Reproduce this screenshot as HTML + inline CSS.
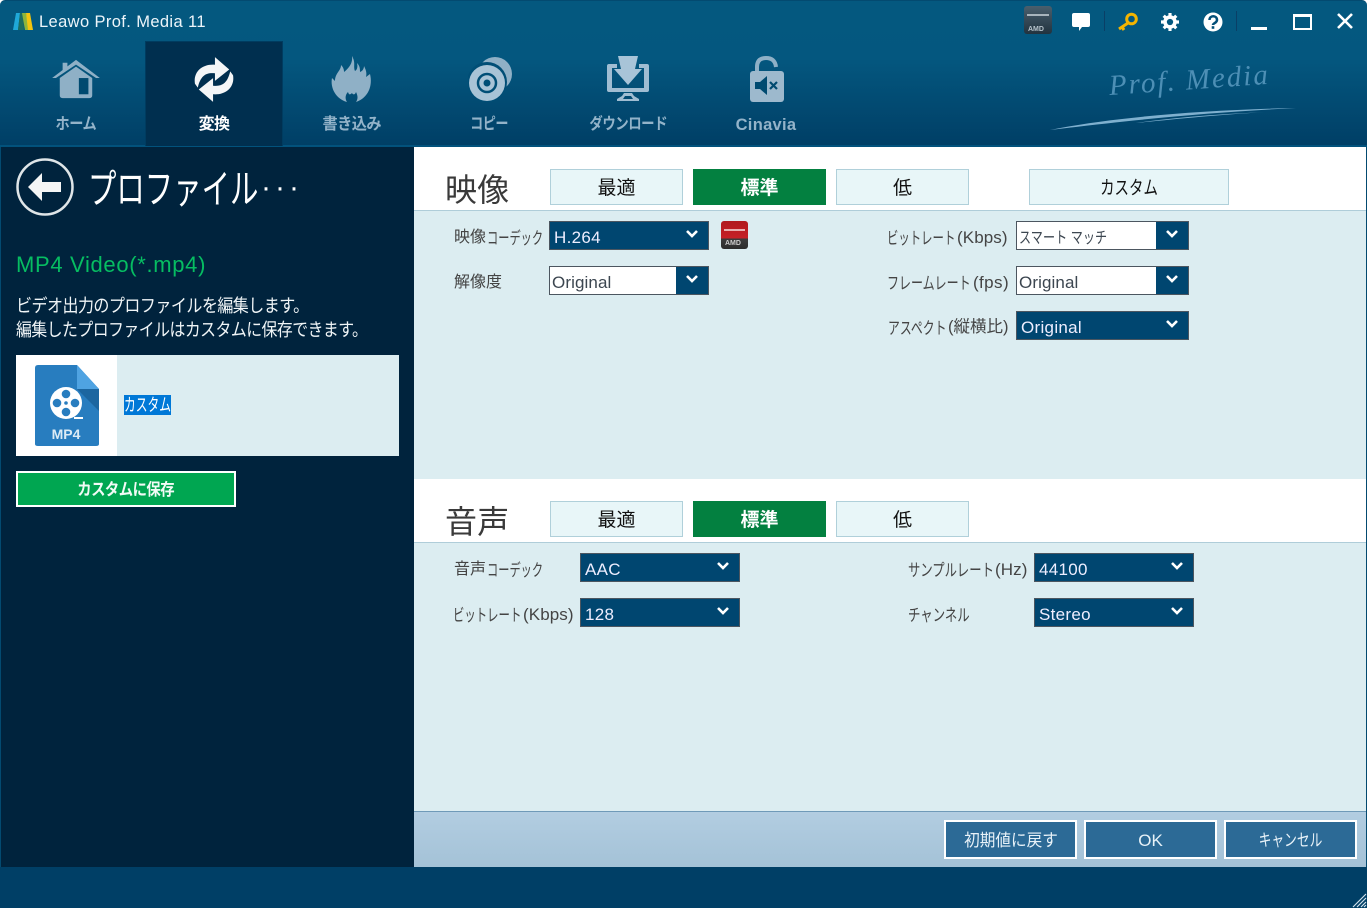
<!DOCTYPE html>
<html lang="ja"><head><meta charset="utf-8"><title>Leawo Prof. Media 11</title>
<style>
html,body{margin:0;padding:0;width:1367px;height:908px;overflow:hidden;background:#fff}
body{position:relative;font-family:"Liberation Sans","Noto Sans CJK JP",sans-serif;color:#333}
.a,.t,.b,.dd{position:absolute;box-sizing:border-box}
.t{white-space:nowrap;line-height:1}
.k{transform:scaleX(var(--s));transform-origin:left center}
.s{display:inline-block;transform:scaleX(var(--s));transform-origin:center center}
.nav{font-weight:bold;font-size:16px;color:#93b3c9;text-align:center;width:138px;top:117px;letter-spacing:-.6px}
.b{top:169px;height:36px;border:1px solid #b0d0da;background:#e8f6f8;color:#111;text-align:center;font-size:19px;line-height:38px}
.b.on{background:#038040;border-color:#038040;color:#fff;font-weight:bold}
.lb{font-size:16px;color:#444}
.kn{font-size:17px;color:#444}
.la{font-size:17px;color:#444;letter-spacing:.1px}
.dd{width:160px;height:29px;background:#004670;border:1px solid #4c5660;color:#eef;font-size:17px;line-height:31px;padding-left:4px;letter-spacing:.3px;white-space:nowrap}
.dd.w{background:#fff;color:#3c4650;padding-left:2px;letter-spacing:.1px}
.dd.w::after{content:"";position:absolute;right:0;top:0;width:32px;height:27px;background:#004670}
.dd svg{position:absolute;right:9px;top:6px;width:14px;height:12px;z-index:2}
.fb{position:absolute;top:820px;width:133px;height:39px;box-sizing:border-box;border:2px solid #fff;background:#2c6a96;color:#e8f2f8;font-size:17px;line-height:38px;text-align:center;white-space:nowrap}
</style></head><body>
<svg width="0" height="0" style="position:absolute"><defs>
<symbol id="cv" viewBox="0 0 14 12"><path d="M2 3l5 5 5-5" fill="none" stroke="#fff" stroke-width="2.6"/></symbol>
</defs></svg>

<!-- header -->
<div class="a" style="left:0;top:0;width:1367px;height:147px;background:linear-gradient(#04587f 0,#04577f 40%,#003f66 100%);border-top:1px solid #034a70;border-bottom:2px solid #02527c;border-radius:5px 5px 0 0"></div>
<svg class="a" style="left:13px;top:11px" width="21" height="20" viewBox="0 0 21 20"><path d="M0 19L3 2h4L5 19z" fill="#1fa8d8"/><path d="M5 19L7 2h3l1 17z" fill="#1c6c60"/><path d="M9 2h4l3 17h-4z" fill="#8db53b"/><path d="M13 2h4l3 17h-5z" fill="#f2c40f"/></svg>
<div class="t" style="left:39px;top:14px;font-size:16.5px;color:#edf5fa;letter-spacing:.38px">Leawo Prof. Media 11</div>

<div class="a" style="left:145px;top:41px;width:138px;height:105px;background:#002f4f;border:1px solid #003c60;border-bottom:0"></div>

<!-- home -->
<svg class="a" style="left:51px;top:58px" width="50" height="42" viewBox="0 0 52 44" fill="#8fb0c6"><path d="M1 21L26 2l25 19h-4L26 7 5 21z"/><path d="M12 5h5v5l-5 4z"/><path d="M26 9l17 12v18q0 3-3 3H12q-3 0-3-3V21z"/><rect x="29" y="21" width="10" height="17" fill="#004a70"/></svg>
<div class="t nav" style="left:7px"><span class="s" style="--s:.89">ホーム</span></div>
<!-- convert -->
<svg class="a" style="left:194px;top:56px" width="40" height="47" viewBox="0 0 42 49" fill="#f4f6f7"><path d="M1 29C-1 17 8 8 22 9V1l15 13-15 12v-8C13 17 7 20 4 33z"/><path d="M41 20C43 32 34 41 20 40v8L5 35l15-12v8C29 32 35 29 38 16z"/></svg>
<div class="t nav" style="left:145px;color:#fff">変換</div>
<!-- burn -->
<svg class="a" style="left:330px;top:55px" width="44" height="48" viewBox="0 0 44 48" fill="#8fb0c6"><path d="M22 1c4 7 1 10 3 15 2-1 3-4 2-8 3 3 3 6 3 9 3-1 4-4 4-6 2 4 3 7 2 11l4-3c3 12-2 24-14 28 2-3 2-6 0-10-1 3-3 3-4 1-2 2-3 2-4-1-3 3-3 7-1 10C6 44 0 33 2 23l3 3c0-8 6-10 6-16 2 2 3 4 3 7 5-4 9-9 8-16z"/></svg>
<div class="t nav" style="left:283px"><span class="s" style="--s:.95">書き込み</span></div>
<!-- copy -->
<svg class="a" style="left:468px;top:55px" width="46" height="48" viewBox="0 0 46 48"><circle cx="27" cy="19" r="17" fill="#8fb0c6"/><circle cx="19" cy="27" r="20" fill="#004e76"/><circle cx="19" cy="28" r="18" fill="#a8c3d6"/><circle cx="19" cy="28" r="9" fill="none" stroke="#004e76" stroke-width="2.500"/><circle cx="19" cy="28" r="3.500" fill="#004e76"/></svg>
<div class="t nav" style="left:420px"><span class="s" style="--s:.82">コピー</span></div>
<!-- download -->
<svg class="a" style="left:606px;top:55px" width="44" height="46" viewBox="0 0 44 46" fill="#a0bdd2"><path d="M3 9h8v4H6v20h32V13h-5V9h8q2 0 2 2v24q0 2-2 2H3q-2 0-2-2V11q0-2 2-2z"/><path d="M12 1h20l-3 13h7L22 30 8 14h7z" fill="#a8c4d8"/><path d="M18 38h8l2 3 5 3v2H11v-2l5-3z"/><path d="M19 41h6l2 3H17z" fill="#014a72"/></svg>
<div class="t nav" style="left:559px"><span class="s" style="--s:.84">ダウンロード</span></div>
<!-- cinavia -->
<svg class="a" style="left:749px;top:56px" width="36" height="47" viewBox="0 0 36 47"><path d="M8 16V11Q8 2 17 2t10 9" fill="none" stroke="#8fb0c6" stroke-width="4"/><rect x="1" y="15" width="34" height="31" rx="3" fill="#9db9cd"/><path d="M6 26h5l7-6v19l-7-6H6z" fill="#004a70"/><path d="M21 26l7 7m0-7l-7 7" stroke="#004a70" stroke-width="2.200"/></svg>
<div class="t nav" style="left:697px;letter-spacing:.3px;font-size:16.500px">Cinavia</div>

<!-- top right icons -->
<div class="a" style="left:1024px;top:6px;width:28px;height:28px;border-radius:3px;background:linear-gradient(#4a5f6d,#22333f)"><div class="a" style="left:3px;top:8px;width:22px;height:2px;background:#a8b4bc"></div><div class="t" style="left:4px;top:20px;font-size:7px;font-weight:bold;color:#b8c4cc">AMD</div></div>
<svg class="a" style="left:1071px;top:12px" width="20" height="20" viewBox="0 0 20 20" fill="#fff"><path d="M3 1h14q2 0 2 2v10q0 2-2 2h-6l-3 4v-4H3q-2 0-2-2V3q0-2 2-2z"/></svg>
<div class="a" style="left:1104px;top:11px;width:1px;height:20px;background:#0a3f66"></div>
<svg class="a" style="left:1117px;top:12px" width="22" height="20" viewBox="0 0 22 20"><circle cx="14.500" cy="7" r="4.800" fill="none" stroke="#f4b400" stroke-width="3"/><path d="M11 11L2 17M5 15l2 3" stroke="#f4b400" stroke-width="3" fill="none"/></svg>
<svg class="a" style="left:1161px;top:13px" width="18" height="18" viewBox="0 0 20 20"><circle cx="10" cy="10" r="5.500" fill="none" stroke="#fff" stroke-width="4"/><g stroke="#fff" stroke-width="3.500"><path d="M10 0v4M10 16v4M0 10h4M16 10h4M3 3l3 3M14 14l3 3M17 3l-3 3M6 14l-3 3"/></g></svg>
<svg class="a" style="left:1203px;top:12px" width="20" height="20" viewBox="0 0 20 20"><circle cx="10" cy="10" r="9.500" fill="#fff"/><path d="M6.500 8c0-5 7.500-5 7.500 0 0 3-4 3-4 5" fill="none" stroke="#034f78" stroke-width="2.500"/><rect x="8.700" y="14.200" width="2.600" height="2.600" fill="#034f78"/></svg>
<div class="a" style="left:1236px;top:11px;width:1px;height:20px;background:#0a3f66"></div>
<div class="a" style="left:1251px;top:27px;width:16px;height:3px;background:#fff"></div>
<div class="a" style="left:1293px;top:14px;width:19px;height:16px;border:2px solid #fff;border-top-width:3px"></div>
<svg class="a" style="left:1336px;top:12px" width="18" height="18" viewBox="0 0 18 18"><path d="M2 2l14 14M16 2L2 16" stroke="#fff" stroke-width="2.600"/></svg>

<!-- logo -->
<div class="t" style="left:1108px;top:72px;font-family:'Liberation Serif',serif;font-style:italic;font-size:29px;color:#4d8fb5;letter-spacing:2px;transform:rotate(-4deg);transform-origin:left top">Prof. Media</div>
<svg class="a" style="left:1048px;top:106px" width="250" height="26" viewBox="0 0 250 26"><path d="M2 24C60 12 150 4 248 2 170 6 100 12 2 24z" fill="#7fb0cf"/><path d="M88 17c50-7 90-9 130-11-50 3-90 7-130 11z" fill="#7fb0cf"/></svg>

<!-- left panel -->
<div class="a" style="left:1px;top:147px;width:413px;height:720px;background:#00233d"></div>
<svg class="a" style="left:16px;top:158px" width="58" height="58" viewBox="0 0 58 58"><circle cx="29" cy="29" r="27.500" fill="none" stroke="#dfe5e8" stroke-width="2.500"/><path d="M12 29L26 15v9h19v10H26v9z" fill="#f5f6f6"/></svg>
<div class="t k" style="--s:.71;left:88px;top:170px;font-size:40px;color:#fff">プロファイル</div>
<div class="t" style="left:261px;top:173px;font-size:30px;color:#fff;letter-spacing:4px">···</div>
<div class="t" style="left:16px;top:254px;font-size:22px;color:#06bd62;letter-spacing:.67px">MP4 Video(*.mp4)</div>
<div class="t k" style="--s:.89;left:16px;top:297px;font-size:18px;color:#f0f5f7;letter-spacing:-.6px">ビデオ出力のプロファイルを編集します。</div>
<div class="t k" style="--s:.882;left:16px;top:321px;font-size:18px;color:#f0f5f7;letter-spacing:-.6px">編集したプロファイルはカスタムに保存できます。</div>
<div class="a" style="left:16px;top:355px;width:383px;height:101px;background:#dcedf1"></div>
<div class="a" style="left:16px;top:355px;width:101px;height:101px;background:#fff"></div>
<svg class="a" style="left:34px;top:364px" width="66" height="83" viewBox="0 0 66 83"><path d="M4 1h39l22 24v55q0 2-3 2H4q-3 0-3-2V4q0-3 3-3z" fill="#287dbf"/><path d="M43 1l22 24H43z" fill="#4fa3e2"/><path d="M43 25h22v22z" fill="#1c66a0"/><circle cx="32" cy="39" r="16" fill="#fff"/><path d="M40 53h9v2h-9z" fill="#fff"/><g fill="#287dbf"><circle cx="32" cy="30" r="4.300"/><circle cx="32" cy="48" r="4.300"/><circle cx="23" cy="39" r="4.300"/><circle cx="41" cy="39" r="4.300"/><circle cx="32" cy="39" r="1.800"/></g><text x="32" y="75" text-anchor="middle" font-family="Liberation Sans" font-weight="bold" font-size="14" fill="#dcebf5">MP4</text></svg>
<div class="a" style="left:124px;top:395px;width:47px;height:20px;background:#0078d7"></div>
<div class="t k" style="--s:.66;left:124px;top:397px;font-size:17.800px;color:#fff">カスタム</div>
<div class="a" style="left:16px;top:471px;width:220px;height:36px;background:#00a651;border:2px solid #fff"></div>
<div class="t" style="left:16px;top:482px;width:220px;text-align:center;font-size:16.500px;font-weight:bold;color:#f2fbf6;letter-spacing:-.6px"><span class="s" style="--s:.87">カスタムに保存</span></div>

<!-- right bg -->
<div class="a" style="left:414px;top:210px;width:952px;height:269px;background:#dcedf1;border-top:1px solid #afcdd9"></div>
<div class="a" style="left:414px;top:542px;width:952px;height:270px;background:#dcedf1;border-top:1px solid #afcdd9"></div>
<div class="a" style="left:414px;top:811px;width:952px;height:56px;background:linear-gradient(#b2cde1,#a4c2d7);border-top:1px solid #6f9ab8"></div>
<div class="a" style="left:0;top:867px;width:1367px;height:41px;background:#003f66"></div>
<div class="a" style="left:0;top:147px;width:1px;height:720px;background:#034a70"></div>
<div class="a" style="left:1366px;top:147px;width:1px;height:720px;background:#034a70"></div>
<svg class="a" style="left:1352px;top:893px" width="15" height="15" viewBox="0 0 15 15"><path d="M1 14L14 1M5 14l9-9M9 14l5-5M12 14l2-2" stroke="#cfe0ea" stroke-width="1.200"/></svg>

<!-- video section -->
<div class="t" style="left:445px;top:174px;font-size:32px;color:#3a3a3a;letter-spacing:.2px">映像</div>
<div class="b" style="left:550px;width:133px">最適</div>
<div class="b on" style="left:693px;width:133px">標準</div>
<div class="b" style="left:836px;width:133px">低</div>
<div class="b" style="left:1029px;width:200px"><span class="s" style="--s:.76">カスタム</span></div>

<div class="t lb" style="left:454px;top:230px">映像</div>
<div class="t kn k" style="--s:.66;left:487px;top:230px">コーデック</div>
<div class="dd" style="left:549px;top:221px">H.264<svg><use href="#cv"/></svg></div>
<div class="a" style="left:721px;top:221px;width:27px;height:28px;border-radius:3px;background:linear-gradient(#b01a1e 0,#c62026 62%,#3c3c3c 63%,#2c2c2c 100%)"><div class="a" style="left:3px;top:8px;width:21px;height:2px;background:#e8b0b0"></div><div class="t" style="left:4px;top:19px;font-size:7px;font-weight:bold;color:#ccc">AMD</div></div>
<div class="t lb" style="left:454px;top:275px">解像度</div>
<div class="dd w" style="left:549px;top:266px">Original<svg><use href="#cv"/></svg></div>

<div class="t kn k" style="--s:.67;left:887px;top:230px">ビットレート</div>
<div class="t la" style="left:957px;top:229px">(Kbps)</div>
<div class="dd w" style="left:1016px;top:221px;width:173px"><span class="k" style="--s:.755;display:inline-block;font-size:16px">スマート マッチ</span><svg><use href="#cv"/></svg></div>
<div class="t kn k" style="--s:.706;left:887px;top:275px">フレームレート</div>
<div class="t la" style="left:973px;top:274px;letter-spacing:.4px">(fps)</div>
<div class="dd w" style="left:1016px;top:266px;width:173px">Original<svg><use href="#cv"/></svg></div>
<div class="t kn k" style="--s:.697;left:888px;top:320px">アスペクト</div>
<div class="t la" style="left:948px;top:319px;font-size:16.500px;letter-spacing:0">(縦横比)</div>
<div class="dd" style="left:1016px;top:311px;width:173px">Original<svg><use href="#cv"/></svg></div>

<!-- audio section -->
<div class="t" style="left:445px;top:506px;font-size:32px;color:#3a3a3a;letter-spacing:.2px">音声</div>
<div class="b" style="left:550px;width:133px;top:501px">最適</div>
<div class="b on" style="left:693px;width:133px;top:501px">標準</div>
<div class="b" style="left:836px;width:133px;top:501px">低</div>

<div class="t lb" style="left:454px;top:562px">音声</div>
<div class="t kn k" style="--s:.66;left:487px;top:562px">コーデック</div>
<div class="dd" style="left:580px;top:553px">AAC<svg><use href="#cv"/></svg></div>
<div class="t kn k" style="--s:.67;left:453px;top:607px">ビットレート</div>
<div class="t la" style="left:523px;top:606px">(Kbps)</div>
<div class="dd" style="left:580px;top:598px">128<svg><use href="#cv"/></svg></div>
<div class="t kn k" style="--s:.725;left:908px;top:562px">サンプルレート</div>
<div class="t la" style="left:995px;top:561px">(Hz)</div>
<div class="dd" style="left:1034px;top:553px">44100<svg><use href="#cv"/></svg></div>
<div class="t kn k" style="--s:.73;left:908px;top:607px">チャンネル</div>
<div class="dd" style="left:1034px;top:598px">Stereo<svg><use href="#cv"/></svg></div>

<!-- footer -->
<div class="fb" style="left:944px"><span class="s" style="--s:.92">初期値に戻す</span></div>
<div class="fb" style="left:1084px">OK</div>
<div class="fb" style="left:1224px"><span class="s" style="--s:.75">キャンセル</span></div>
</body></html>
